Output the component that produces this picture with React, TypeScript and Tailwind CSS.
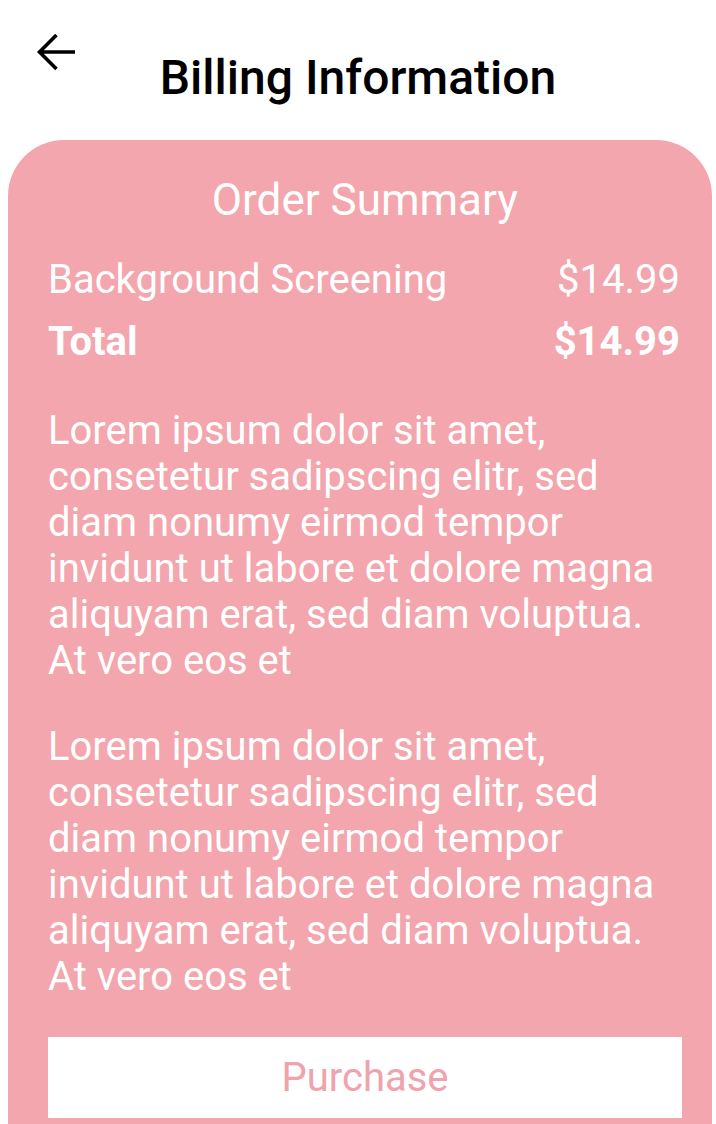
import React from "react";

const lorem =
  "Lorem ipsum dolor sit amet, consetetur sadipscing elitr, sed diam nonumy eirmod tempor invidunt ut labore et dolore magna aliquyam erat, sed diam voluptua. At vero eos et";

export default function App() {
  return (
    <div
      className="w-[716px] h-[1124px] overflow-hidden bg-white flex flex-col"
      style={{ fontFamily: "Roboto, 'Noto Sans', sans-serif" }}
    >
      <header className="relative h-[140px] shrink-0 pt-[50px]">
        <button className="absolute left-[37px] top-[34px] w-[38px] h-[37px]">
          <svg width="38" height="37" viewBox="0 0 38 37" fill="none">
            <path
              d="M38 18H2.5M19.5 1 2.5 18l17 17"
              stroke="#000"
              strokeWidth="3.6"
            />
          </svg>
        </button>
        <h1 className="text-center text-[48px] leading-[56px] font-medium text-black">
          Billing Information
        </h1>
      </header>
      <main className="flex-1 bg-[#f3a6ad] ml-[8px] mr-[4px] rounded-t-[56px] pl-[40px] pr-[30px] pt-[34px] text-white flex flex-col">
        <h2 className="text-center text-[44px] leading-[52px]">Order Summary</h2>
        <div className="mt-[23px] flex justify-between text-[40px] leading-[62px]">
          <span>Background Screening</span>
          <span className="mr-[2px]">$14.99</span>
        </div>
        <div className="flex justify-between text-[40px] leading-[62px] font-bold">
          <span>Total</span>
          <span className="mr-[2px]">$14.99</span>
        </div>
        <p className="mt-[35px] text-[40px] leading-[46px]">{lorem}</p>
        <p className="mt-[40px] text-[40px] leading-[46px]">{lorem}</p>
        <button className="mt-[37px] h-[81px] shrink-0 bg-white text-[#f0a3ad] text-[40px] leading-[81px]">
          Purchase
        </button>
      </main>
    </div>
  );
}
